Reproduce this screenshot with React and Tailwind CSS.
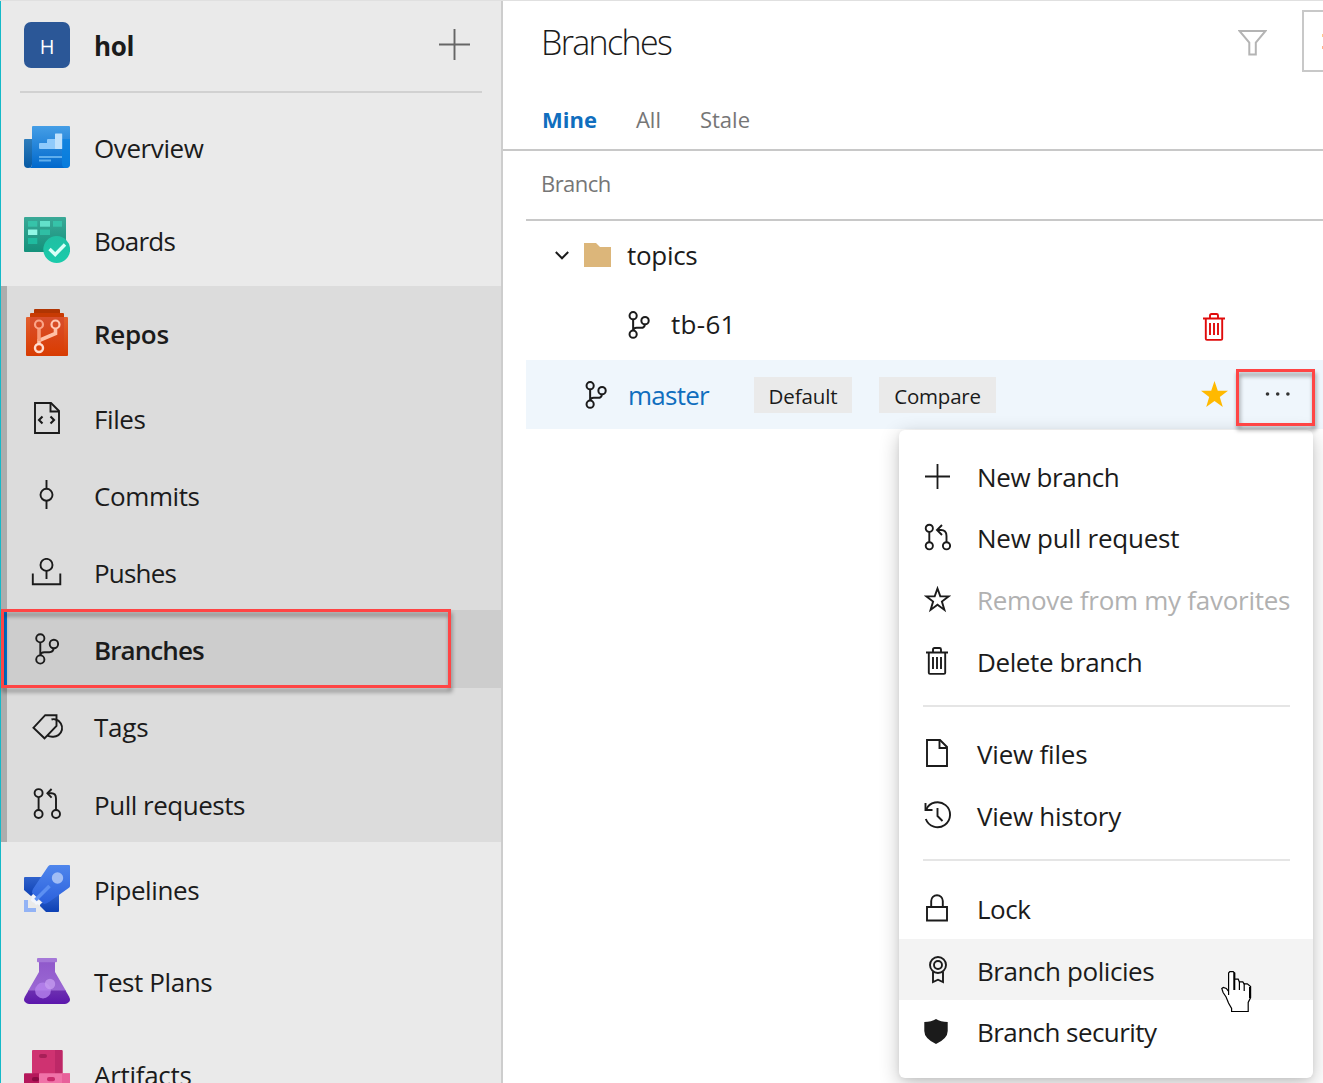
import React from "react";

const STROKE = { fill: "none", stroke: "currentColor", strokeWidth: 1.9 };

/* ---------- sidebar service icons (46px wide) ---------- */

function OverviewIcon() {
  return (
    <svg width="46" height="42" viewBox="0 0 46 42">
      <defs>
        <linearGradient id="ovMain" x1="0" y1="0" x2="0" y2="1">
          <stop offset="0" stopColor="#459ee6" />
          <stop offset="1" stopColor="#0068cc" />
        </linearGradient>
        <linearGradient id="ovFlap" x1="0" y1="0" x2="0" y2="1">
          <stop offset="0" stopColor="#2f7dbb" />
          <stop offset="1" stopColor="#0659a3" />
        </linearGradient>
      </defs>
      <path d="M0 14q0-1 1-1h7v25q0 4-4 4t-4-4z" fill="url(#ovFlap)" />
      <path d="M8 1q0-1 1-1h36q1 0 1 1v37q0 4-4 4H4q4 0 4-4z" fill="url(#ovMain)" />
      <path d="M38 13h8v25q0 4-4 4t-4-4z" fill="#0a82e0" opacity=".75" />
      <path d="M15 18q0-1 1-1h7v-3q0-1 1-1h7v10H16q-1 0-1-1z" fill="#8fcafb" />
      <rect x="31" y="7.500" width="7.200" height="15.500" rx=".6" fill="#bfe1fc" />
      <rect x="15" y="30" width="23" height="2" fill="#5faeed" />
      <rect x="15" y="33.500" width="12" height="2" fill="#5faeed" />
    </svg>
  );
}

function BoardsIcon() {
  return (
    <svg width="46" height="46" viewBox="0 0 46 46">
      <defs>
        <linearGradient id="bdMain" x1="0" y1="0" x2="0" y2="1">
          <stop offset="0" stopColor="#3aa997" />
          <stop offset="1" stopColor="#14917b" />
        </linearGradient>
        <linearGradient id="bdDot" x1="0" y1="0" x2="0" y2="1">
          <stop offset="0" stopColor="#20bfa2" />
          <stop offset="1" stopColor="#1acbab" />
        </linearGradient>
      </defs>
      <rect width="42" height="35" rx="1" fill="url(#bdMain)" />
      <rect x="4" y="4" width="9.300" height="5.700" fill="#36c3a9" />
      <rect x="16" y="4" width="10" height="5.700" fill="#62e0ca" />
      <rect x="29" y="4" width="9" height="5.700" fill="#36c3a9" />
      <rect x="4" y="12.500" width="9.300" height="5.500" fill="#8ff8e5" />
      <rect x="16" y="12.500" width="10" height="5.500" fill="#2fbea4" />
      <rect x="4" y="21" width="9.300" height="6" fill="#1fbb9f" />
      <circle cx="32.700" cy="32.500" r="13.400" fill="url(#bdDot)" />
      <path d="M25.500 32l5.700 5.500L41 27.500" fill="none" stroke="#d9fff7" strokeWidth="3.400" />
    </svg>
  );
}

function ReposIcon() {
  return (
    <svg width="46" height="47" viewBox="0 0 46 47">
      <defs>
        <linearGradient id="rpMain" x1="0" y1="0" x2="0" y2="1">
          <stop offset="0" stopColor="#e2602f" />
          <stop offset="1" stopColor="#d73b02" />
        </linearGradient>
        <linearGradient id="rpInner" x1="0" y1="0" x2="0" y2="1">
          <stop offset="0" stopColor="#d84f2e" />
          <stop offset="1" stopColor="#da3f06" />
        </linearGradient>
      </defs>
      <path d="M10 1q0-1 1-1h24q1 0 1 1v4H10z" fill="#b03503" />
      <path d="M6 5q0-1 1-1h32q1 0 1 1v4H6z" fill="#c83b04" />
      <rect x="2" y="8" width="42" height="39" rx="1" fill="url(#rpMain)" />
      <path d="M6 8h34v33H6z" fill="url(#rpInner)" />
      <g fill="none" strokeWidth="3.600">
        <path d="M31.500 20v4.500L15 31.500V35" stroke="#ffc0a5" />
        <path d="M15 20v12" stroke="#f79a78" />
        <circle cx="15" cy="15.500" r="4" stroke="#fba488" strokeWidth="2.200" />
        <circle cx="31.500" cy="15.500" r="4" stroke="#ffc8b3" strokeWidth="2.200" />
        <circle cx="15" cy="39" r="4" stroke="#ffdccf" strokeWidth="2.400" />
      </g>
    </svg>
  );
}

function PipelinesIcon() {
  return (
    <svg width="46" height="47" viewBox="0 0 46 47">
      <defs>
        <linearGradient id="plMain" x1="0" y1="0" x2="0" y2="1">
          <stop offset="0" stopColor="#4f86ec" />
          <stop offset="1" stopColor="#2b60dd" />
        </linearGradient>
        <linearGradient id="plWing" x1="0" y1="0" x2="0" y2="1">
          <stop offset="0" stopColor="#2f62cc" />
          <stop offset="1" stopColor="#0d40b4" />
        </linearGradient>
      </defs>
      <path d="M0 13q0-1 1-1h17L7.500 31.500 0 25z" fill="url(#plWing)" />
      <path d="M16 39l19-10v17q0 1-1 1H22l-6-6z" fill="url(#plWing)" />
      <path d="M26 0h19q1 0 1 1v20q0 1-1 1.700L25 37q-2 1.500-5 2L8 28q0-2 1-4L24 1.500Q25 0 26 0z" fill="url(#plMain)" />
      <path d="M7 31l2.500-1.500 2 2v2.500l2 2h2.500l1.500 2-2 2.500-2-1.500-1.500 1-1.500-2-2-1-2-2 1.500-2z" fill="#f2f5fb" />
      <path d="M11.500 35L25.500 21" stroke="#5c8ff2" strokeWidth="3.600" />
      <circle cx="33.500" cy="13" r="5.700" fill="#a0bdf5" />
      <path d="M0 35h4v8h8v4H0z" fill="#93b3f5" />
    </svg>
  );
}

function TestPlansIcon() {
  return (
    <svg width="46" height="46" viewBox="0 0 46 46">
      <defs>
        <linearGradient id="tpMain" x1="0" y1="0" x2="0" y2="1">
          <stop offset="0" stopColor="#9059cb" />
          <stop offset="1" stopColor="#9b69d4" />
        </linearGradient>
        <linearGradient id="tpLiquid" x1="0" y1="0" x2="0" y2="1">
          <stop offset="0" stopColor="#6c2fb0" />
          <stop offset="1" stopColor="#5c17ac" />
        </linearGradient>
      </defs>
      <path d="M15 4h16v10l11 19H4l11-19z" fill="url(#tpMain)" />
      <rect x="13" width="20" height="4.300" rx="1" fill="#a578d8" />
      <path d="M4.500 32.500h37l3.500 6q2 3.500 0 5.500-2 2-4 2H5q-2 0-4-2-2-2 0-5.500z" fill="url(#tpLiquid)" />
      <circle cx="19" cy="32.500" r="7.900" fill="#b783ee" opacity=".8" />
      <circle cx="26" cy="26" r="5.200" fill="#c79df0" opacity=".75" />
    </svg>
  );
}

function ArtifactsIcon() {
  return (
    <svg width="46" height="46" viewBox="0 0 46 46">
      <rect x="8" width="30.500" height="24" rx="1" fill="#cf3271" />
      <path d="M31 0h6.500q1 0 1 1v23H31z" fill="#bd2867" />
      <rect x="15" y="4" width="8" height="4" rx="2" fill="#a81f58" />
      <rect y="23.300" width="15.500" height="22.700" rx="1" fill="#b5185b" />
      <rect x="15" y="23.300" width="31" height="22.700" rx="1" fill="#f072a8" />
      <rect x="38" y="23.300" width="8" height="22.700" fill="#e8609a" />
      <rect x="8" y="27" width="7" height="4.300" rx="2" fill="#8a0a42" />
      <rect x="23" y="27" width="8" height="4.300" rx="2" fill="#ca2b6c" />
    </svg>
  );
}

/* ---------- line icons ---------- */

function FilesIcon() {
  return (
    <svg width="46" height="32" viewBox="0 0 46 32" {...STROKE}>
      <path d="M11 1h16l8 8v22H11z" />
      <path d="M26.500 1v8.500H35" />
      <path d="M18.500 14.500L15 18l3.500 3.500M26.500 14.500L30 18l-3.500 3.500" strokeWidth="2.100" />
    </svg>
  );
}

function CommitIcon() {
  return (
    <svg width="46" height="30" viewBox="0 0 46 30" {...STROKE}>
      <path d="M22.500 0v9M22.500 21v8" />
      <circle cx="22.500" cy="14.800" r="6" />
    </svg>
  );
}

function PushIcon() {
  return (
    <svg width="46" height="28" viewBox="0 0 46 28" {...STROKE}>
      <circle cx="22.500" cy="6.900" r="6" />
      <path d="M22.500 13v8M8.800 15.500v10.800h27.500V15.500" />
    </svg>
  );
}

function BranchIcon({ width = 24, height = 32, strokeWidth = 1.9 }) {
  return (
    <svg width={width} height={height} viewBox="0 0 24 32" {...STROKE} strokeWidth={strokeWidth}>
      <circle cx="5.300" cy="5.300" r="4.100" />
      <circle cx="18.900" cy="11" r="4.200" />
      <circle cx="5.300" cy="26.500" r="4.100" />
      <path d="M5.300 9.500v13c.3-2.400 1.500-3.300 4-3.300h5c3 0 4.200-1.600 4.400-4" />
    </svg>
  );
}

function TagsIcon() {
  return (
    <svg width="46" height="26" viewBox="0 0 46 26" {...STROKE}>
      <path d="M9.400 13.800L21.200 1.200h11.300v10.600L20.500 24.300z" />
      <path d="M27.500 5.500q2.200-.8 4.200 0a8.800 8.800 0 0 1-3.500 17.200q-2.600 0-4.700-1" />
    </svg>
  );
}

function PullRequestIcon() {
  return (
    <svg width="28" height="31" viewBox="0 0 28 31" {...STROKE}>
      <circle cx="5.600" cy="5.100" r="4" />
      <circle cx="5.600" cy="26" r="4" />
      <circle cx="23" cy="26" r="4" />
      <path d="M5.600 9v13M23 22V10.500c0-3.500-1.500-5.300-4.500-5.300h-4" />
      <path d="M18.600 1l-4.200 4.300 4.200 4.300" />
    </svg>
  );
}

function NewPullRequestIcon() {
  return (
    <svg width="28" height="28" viewBox="0 0 28 28" {...STROKE}>
      <circle cx="6.300" cy="5.300" r="3.600" />
      <circle cx="6.300" cy="22.800" r="3.600" />
      <circle cx="23.500" cy="22.800" r="3.600" />
      <path d="M6.300 9v10M23.500 19V13c0-4-2-6-5.500-6h-3.700" />
      <path d="M19 2l-5 5 5 5" />
    </svg>
  );
}

function TrashIcon() {
  return (
    <svg width="22" height="28" viewBox="0 0 22 28" {...STROKE}>
      <path d="M0 5.500h22M2.800 5.500v20.200q0 1.200 1.200 1.200h14q1.200 0 1.200-1.200V5.500M7 5V2.500Q7 1 8.500 1h5Q15 1 15 2.500V5" />
      <path d="M7 10v12M11 10v12M15 10v12" />
    </svg>
  );
}

function PlusIcon({ size, className = "", strokeWidth = 1.9 }) {
  return (
    <svg className={className} width={size} height={size} viewBox="0 0 26 26" {...STROKE} strokeWidth={strokeWidth}>
      <path d="M0 13h26M13 0v26" />
    </svg>
  );
}

function StarIcon() {
  return (
    <svg className="ml-px shrink-0" width="27" height="27" viewBox="0 0 27 27" {...STROKE}>
      <path d="M13.500 2.500l2.800 7.900h8.200l-6.600 5.100 2.500 8.400-6.900-5.100-6.900 5.100 2.500-8.400-6.600-5.100h8.200z" />
    </svg>
  );
}

function PageIcon() {
  return (
    <svg width="22" height="28" viewBox="0 0 22 28" {...STROKE}>
      <path d="M1 1h13l7 7v19H1z" />
      <path d="M13.500 1v8H21" />
    </svg>
  );
}

function HistoryIcon() {
  return (
    <svg className="ml-[2px] shrink-0" width="28" height="28" viewBox="0 0 28 28" {...STROKE}>
      <path d="M2.200 8.500A12.500 12.500 0 1 1 1.800 18" />
      <path d="M1.500 2v7h7M13.500 7v8l5 5" />
    </svg>
  );
}

function LockIcon() {
  return (
    <svg width="22" height="28" viewBox="0 0 22 28" {...STROKE}>
      <path d="M1 13h20v13.500H1zM5.200 13V7a5.800 5.800 0 0 1 11.600 0v6" />
    </svg>
  );
}

function RibbonIcon() {
  return (
    <svg className="ml-px" width="18" height="28" viewBox="0 0 18 28" {...STROKE}>
      <circle cx="9" cy="9" r="8" />
      <circle cx="9" cy="9" r="4" />
      <path d="M4 15.500V26l5-2.300 5 2.300V15.500" />
    </svg>
  );
}

function ShieldIcon() {
  return (
    <svg className="-ml-[2px]" width="24" height="25" viewBox="0 0 24 25" fill="currentColor">
      <path d="M12 0q4.500 3 11.700 3v9q0 7.500-11.700 13Q.300 19.500.300 12V3Q7.500 3 12 0z" />
    </svg>
  );
}

/* ---------- sidebar ---------- */

function HubItem({ icon, label, className = "", labelClass = "mt-[3px] tracking-[-0.4px]" }) {
  return (
    <div className={`flex h-[93px] shrink-0 items-center pl-[23px] ${className}`}>
      <span className="flex w-[46px] justify-center">{icon}</span>
      <span className={`ml-6 whitespace-nowrap ${labelClass}`}>{label}</span>
    </div>
  );
}

function SubItem({ icon, label, labelClass = "mt-[3px] tracking-[-0.4px]", active = false }) {
  return (
    <div
      className={`flex items-center border-l-[6px] pl-[17px] ${
        active ? "h-[78px] border-[#0078d4] bg-[#cdcdcd]" : "h-[77px] border-[#adadad]"
      }`}
    >
      <span className="flex w-[46px] justify-center">{icon}</span>
      <span className={`ml-6 whitespace-nowrap ${labelClass}`}>{label}</span>
    </div>
  );
}

function Sidebar() {
  return (
    <aside className="flex w-[503px] shrink-0 flex-col overflow-hidden border-l border-r-2 border-l-[#14b9c8] border-r-[#cdcdcd] bg-[#eaeaea] text-[26px]">
      <div className="mx-[19px] flex h-[92px] shrink-0 items-center border-b-2 border-[#d1d1d1] pb-[2px] pl-1 pr-3">
        <span className="flex size-[46px] items-center justify-center rounded-[7px] bg-[#2b5797] pt-[3px] text-[20px] text-white">
          H
        </span>
        <span className="ml-6 mt-px flex-1 font-bold tracking-[-0.4px]">hol</span>
        <PlusIcon size={31} strokeWidth={1.6} className="-mt-[2px] text-[#666]" />
      </div>
      <HubItem className="mt-[7px]" icon={<OverviewIcon />} label="Overview" />
      <HubItem icon={<BoardsIcon />} label="Boards" labelClass="mt-[3px] tracking-[-0.8px]" />
      <div className="bg-[#dcdcdc]">
        <HubItem
          className="border-l-[6px] border-[#adadad] !pl-[17px]"
          icon={<ReposIcon />}
          label="Repos"
          labelClass="mt-[3px] font-semibold tracking-[-0.3px]"
        />
        <SubItem icon={<FilesIcon />} label="Files" />
        <SubItem icon={<CommitIcon />} label="Commits" />
        <SubItem icon={<PushIcon />} label="Pushes" labelClass="mt-[3px] tracking-[-0.8px]" />
        <SubItem active icon={<BranchIcon />} label="Branches" labelClass="mt-px font-semibold tracking-[-0.9px]" />
        <SubItem icon={<TagsIcon />} label="Tags" labelClass="mt-px tracking-[-0.2px]" />
        <SubItem icon={<PullRequestIcon />} label="Pull requests" labelClass="mt-[3px] tracking-[-0.48px]" />
      </div>
      <HubItem icon={<PipelinesIcon />} label="Pipelines" />
      <HubItem className="-mt-px" icon={<TestPlansIcon />} label="Test Plans" />
      <HubItem className="-mt-px" icon={<ArtifactsIcon />} label="Artifacts" labelClass="mt-[5px] tracking-[-0.3px]" />
    </aside>
  );
}

/* ---------- context menu ---------- */

function MenuItem({ icon, label, className = "h-[62px]", labelClass = "tracking-[-0.4px]" }) {
  return (
    <div className={`flex items-center pl-6 ${className}`}>
      <span className="-mt-[2px] flex w-[28px] justify-center">{icon}</span>
      <span className={`ml-[26px] whitespace-nowrap ${labelClass}`}>{label}</span>
    </div>
  );
}

function MenuDivider() {
  return <div className="mb-4 ml-6 mr-[23px] mt-3 h-[2px] bg-[#e5e5e5]" />;
}

function BranchMenu() {
  return (
    <div className="absolute left-[899px] top-[430px] h-[648px] w-[414px] rounded-md bg-white pt-4 text-[26px] shadow-[0_6px_20px_rgba(0,0,0,0.24),0_1px_5px_rgba(0,0,0,0.06)]">
      <MenuItem icon={<PlusIcon size={25} />} label="New branch" />
      <MenuItem className="h-[61px] pb-px" icon={<NewPullRequestIcon />} label="New pull request" labelClass="tracking-[-0.25px]" />
      <MenuItem icon={<StarIcon />} label="Remove from my favorites" labelClass="-mt-px text-[#b1b1b1] tracking-[-0.27px]" />
      <MenuItem icon={<TrashIcon />} label="Delete branch" />
      <MenuDivider />
      <MenuItem icon={<PageIcon />} label="View files" labelClass="tracking-[-0.2px]" />
      <MenuItem icon={<HistoryIcon />} label="View history" labelClass="tracking-[-0.25px]" />
      <MenuDivider />
      <MenuItem className="h-[62px] pt-[2px]" icon={<LockIcon />} label="Lock" labelClass="tracking-[-0.5px]" />
      <MenuItem className="h-[61px] bg-[#f3f3f3] pt-[2px]" icon={<RibbonIcon />} label="Branch policies" labelClass="tracking-[-0.43px]" />
      <MenuItem className="h-[62px] pt-[2px]" icon={<ShieldIcon />} label="Branch security" labelClass="tracking-[-0.56px]" />
    </div>
  );
}

/* ---------- branches page ---------- */

function BranchesPage() {
  return (
    <main className="min-w-0 flex-1 overflow-hidden bg-white">
      <header className="flex h-[83px] items-center pb-[3px] pl-[38px]">
        <h1 className="mt-[2px] flex-1 text-[34px] font-light tracking-[-1.65px]">Branches</h1>
        <svg className="mr-[35px] mt-[3px] text-[#b4b4b4]" width="29" height="26" viewBox="0 0 29 26" fill="none" stroke="currentColor" strokeWidth="2">
          <path d="M1.500 1h26l-9.700 11.500V24.500h-6.500V12.500z" />
        </svg>
        <div className="flex h-[62px] w-[21px] flex-col items-end justify-center gap-[9px] border-2 border-r-0 border-[#c8c8c8]">
          <span className="h-[3px] w-px bg-[#ffc98a]" />
          <span className="h-[3px] w-px bg-[#ffb58a]" />
        </div>
      </header>
      <nav className="flex h-[67px] items-center gap-[39px] border-b-2 border-[#c8c8c8] pb-[2px] pl-[39px] pt-[6px] text-[22px] text-[#767676]">
        <span className="font-bold text-[#106ebe]">Mine</span>
        <span>All</span>
        <span>Stale</span>
      </nav>
      <div className="ml-[23px] flex h-[70px] items-center border-b-2 border-[#c8c8c8] pb-[5px] pl-[15px] text-[22px] tracking-[-0.55px] text-[#767676]">
        Branch
      </div>
      <div className="ml-[23px] flex h-[69px] items-center pb-px pl-[29px] text-[26px]">
        <svg width="14" height="9" viewBox="0 0 14 9" fill="none" stroke="currentColor" strokeWidth="2">
          <path d="M.800 1L7 7.300 13.200 1" />
        </svg>
        <svg className="ml-[15px]" width="27" height="24" viewBox="0 0 27 24" fill="#dcb67a">
          <path d="M0 0h12l4 4h11v20H0z" />
        </svg>
        <span className="-mt-px ml-[16px] tracking-[-0.3px]">topics</span>
      </div>
      <div className="ml-[23px] flex h-[70px] items-center pl-[102px] text-[26px]">
        <BranchIcon width={22} height={28} strokeWidth={2.3} />
        <span className="-mt-[2px] ml-[21px] w-[532px] tracking-[0.3px]">tb-61</span>
        <span className="mt-[4px] text-[#e00b0b]">
          <TrashIcon />
        </span>
      </div>
      <div className="ml-[23px] flex h-[69px] items-center bg-[#eff6fc] pl-[59px] text-[26px]">
        <BranchIcon width={22} height={28} strokeWidth={2.3} />
        <span className="ml-[21px] w-[126px] tracking-[-0.75px] text-[#106ebe]">master</span>
        <span className="flex h-9 w-[98px] items-center justify-center bg-[#eaeaea] pt-[3px] text-[20.500px] tracking-[-0.1px]">Default</span>
        <span className="ml-[27px] flex h-9 w-[117px] items-center justify-center bg-[#eaeaea] pt-[3px] text-[20.500px] tracking-[-0.2px]">Compare</span>
        <svg className="ml-[205px] -mt-px" width="27" height="26" viewBox="0 0 27 26" fill="#ffb900">
          <path d="M13.500 0l3.300 9.800H27l-8.200 6.200 3 10-8.300-6-8.300 6 3-10L0 9.800h10.200z" />
        </svg>
        <svg className="-mt-px ml-[37px]" width="26" height="4" viewBox="0 0 26 4" fill="#333">
          <circle cx="2.500" cy="2" r="1.800" />
          <circle cx="12.700" cy="2" r="1.800" />
          <circle cx="22.900" cy="2" r="1.800" />
        </svg>
      </div>
    </main>
  );
}

function HandCursor() {
  return (
    <svg className="absolute left-[1221px] top-[971px]" width="31" height="42" viewBox="0 0 31 42" stroke="#000" strokeWidth="1.200">
      <path
        d="M7.600 24V2L8.800.700h3.400L13.500 2v6.200h3.700l1.200 2.700h3.400l1.300 2h3.200l3.300 2.600V26.500l-2.400 5v9H10.600v-3L7.500 32l-2.400-6-3-4.500-1.300-4 1.500-1 3 1 2.300 3z"
        fill="#fff"
      />
      <path d="M13.300 1.500V19M29 16v11" strokeWidth="2" />
      <path d="M18.400 10.500V19M23.200 12.500V20" />
    </svg>
  );
}

export default function App() {
  return (
    <div className="relative flex h-[1083px] w-[1323px] overflow-hidden border-t border-[#e0e0e0] font-['Open_Sans','Noto_Sans',sans-serif] leading-none text-[#1b1b1b]">
      <Sidebar />
      <BranchesPage />
      <div className="absolute inset-x-0 -top-px bottom-0">
        <BranchMenu />
        <div className="absolute left-px top-[609px] h-[79px] w-[450px] border-[3px] border-[#ff4545] drop-shadow-[1px_4px_2px_rgba(0,0,0,0.4)]" />
        <div className="absolute left-[1236px] top-[369px] h-[57px] w-[79px] border-[3px] border-[#ff4545] drop-shadow-[1px_4px_2px_rgba(0,0,0,0.4)]" />
        <HandCursor />
      </div>
    </div>
  );
}
